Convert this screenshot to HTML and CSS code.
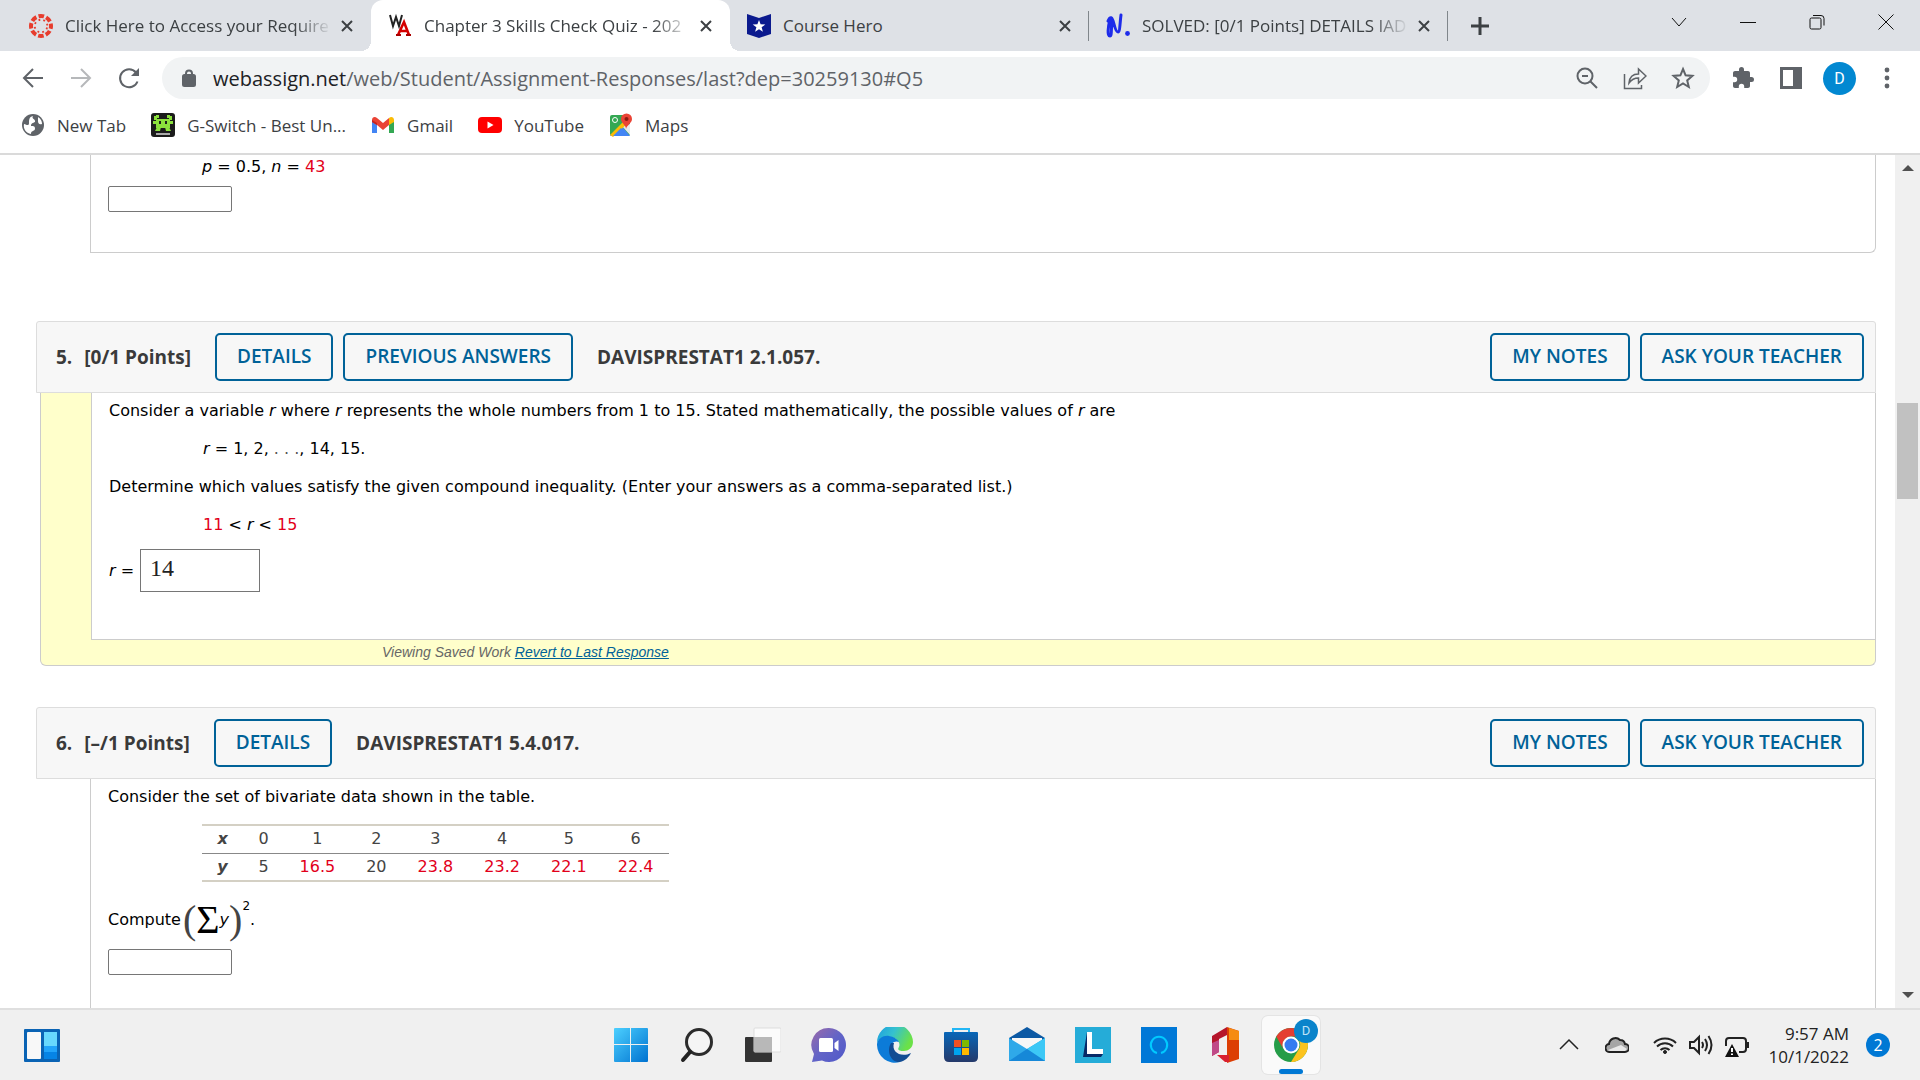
FILE: index.html
```html
<!DOCTYPE html>
<html lang="en">
<head>
    <meta charset="UTF-8">
    <meta name="viewport" content="width=device-width, initial-scale=1.0">
    <title>Chapter 3 Skills Check Quiz</title>
    <link rel="stylesheet" href="styles.css">
</head>
<body>
    <!-- Tabs -->
    <div class="tab-strip">
        <div class="tabs">
            <div class="tab">
                <svg class="tab-icon" viewBox="0 0 24 24">
                    <circle cx="12" cy="12" r="10" fill="none" stroke="#e73c2d" stroke-width="4" stroke-dasharray="5.6 2.25" stroke-dashoffset="2.8"/>
                    <circle cx="12" cy="12" r="6.3" fill="none" stroke="#e73c2d" stroke-width="1.8" stroke-dasharray="1.8 3.15" stroke-dashoffset="-1.6"/>
                </svg>
                <span class="tab-title faded">Click Here to Access your Require</span>
                <button class="tab-close" aria-label="Close tab"><svg viewBox="0 0 12 12"><path d="M1 1l10 10M11 1L1 11"/></svg></button>
            </div>
            <div class="tab active">
                <svg class="tab-icon" viewBox="0 0 24 24">
                    <path d="M2 1l3 11 3-9 3 9 3-11" fill="none" stroke="#222" stroke-width="2"/>
                    <path d="M10 21l6-13 5 13M12 17h7" fill="none" stroke="#d40000" stroke-width="2.6"/>
                    <path d="M8 21h5M18 21h5" stroke="#a00" stroke-width="2"/>
                </svg>
                <span class="tab-title faded">Chapter 3 Skills Check Quiz - 202</span>
                <button class="tab-close" aria-label="Close tab"><svg viewBox="0 0 12 12"><path d="M1 1l10 10M11 1L1 11"/></svg></button>
            </div>
            <div class="tab divided">
                <svg class="tab-icon" viewBox="0 0 24 24">
                    <path d="M0 0l12 4 12-4v20l-12 4-12-4z" fill="#0b1a8e"/>
                    <path d="M12 6l1.6 4.3 4.7.2-3.700 2.800 1.300 4.500-3.900-2.600-3.900 2.600 1.300-4.500-3.700-2.800 4.700-.2z" fill="#fff"/>
                </svg>
                <span class="tab-title">Course Hero</span>
                <button class="tab-close" aria-label="Close tab"><svg viewBox="0 0 12 12"><path d="M1 1l10 10M11 1L1 11"/></svg></button>
            </div>
            <div class="tab divided">
                <svg class="tab-icon" viewBox="0 0 24 24">
                    <path d="M2 7c2-5 5-4 4 1-1 6 0 14-2 14-3 0-2-9 0-17 2-2 3 1 4 5s2 8 4 8c2 0 2-10 3-17" fill="none" stroke="#1d2bea" stroke-width="3" stroke-linecap="round"/>
                    <circle cx="21.500" cy="19.500" r="2.400" fill="#1d2bea"/>
                </svg>
                <span class="tab-title faded">SOLVED: [0/1 Points] DETAILS IAD</span>
                <button class="tab-close" aria-label="Close tab"><svg viewBox="0 0 12 12"><path d="M1 1l10 10M11 1L1 11"/></svg></button>
            </div>
            <button class="new-tab" aria-label="New tab"><svg viewBox="0 0 18 18"><path d="M9 0v18M0 9h18"/></svg></button>
        </div>
        <div class="window-controls">
            <button aria-label="Search tabs"><svg viewBox="0 0 16 16"><path d="M1 4l7 8 7-8"/></svg></button>
            <button aria-label="Minimize"><svg viewBox="0 0 16 16"><path d="M0 8.500h16"/></svg></button>
            <button aria-label="Restore"><svg viewBox="0 0 16 16"><rect x="1" y="4" width="11" height="11" rx="1.500"/><path d="M4 1.500h8q3 0 3 3v7"/></svg></button>
            <button aria-label="Close"><svg viewBox="0 0 16 16"><path d="M.5 .5l15 15M15.500 .5l-15 15"/></svg></button>
        </div>
    </div>

    <!-- Address bar -->
    <div class="toolbar">
        <div class="nav-buttons">
            <button aria-label="Back"><svg viewBox="0 0 24 24"><path d="M22 12H3M12 3l-9 9 9 9"/></svg></button>
            <button class="disabled" aria-label="Forward"><svg viewBox="0 0 24 24"><path d="M2 12h19M12 3l9 9-9 9"/></svg></button>
            <button aria-label="Reload"><svg viewBox="0 0 24 24"><path d="M20.500 15.500A9 9 0 1 1 19 6.500"/><path d="M22 2v8h-8z" fill="#5f6368" stroke="none"/></svg></button>
        </div>
        <div class="omnibox">
            <svg class="lock" viewBox="0 0 14 18"><rect x="1" y="6" width="12" height="11" rx="1.500" fill="#5f6368"/><path d="M4 7V4.500a3 3 0 0 1 6 0V7" fill="none" stroke="#5f6368" stroke-width="2"/></svg>
            <span class="url">webassign.net<span class="url-path">/web/Student/Assignment-Responses/last?dep=30259130#Q5</span></span>
            <button aria-label="Zoom"><svg viewBox="0 0 24 24"><circle cx="10" cy="10" r="7.500"/><path d="M15.500 15.500l6.500 6.500M7 10h6"/></svg></button>
            <button aria-label="Share"><svg viewBox="0 0 24 24"><path d="M1.500 8v14.500h17V19" stroke-width="1.500"/><path d="M6 17c.5-6 4-9 9.500-9V3l7.500 7-7.500 7v-5c-4 0-7 1.500-9.500 5z" stroke-width="1.500"/></svg></button>
            <button aria-label="Bookmark"><svg viewBox="0 0 24 24"><path d="M12 3l2.600 6.300 6.800.6-5.200 4.500 1.600 6.600-5.800-3.500-5.800 3.500 1.600-6.600-5.200-4.500 6.800-.6z"/></svg></button>
        </div>
        <div class="tool-buttons">
            <button aria-label="Extensions"><svg viewBox="0 0 24 24"><path d="M20.500 11H19V7c0-1.100-.9-2-2-2h-4V3.500a2.500 2.500 0 0 0-5 0V5H4c-1.100 0-2 .9-2 2v3.800h1.500a2.700 2.700 0 0 1 0 5.400H2V20c0 1.100.9 2 2 2h3.800v-1.500a2.700 2.700 0 0 1 5.400 0V22H17c1.100 0 2-.9 2-2v-4h1.500a2.500 2.500 0 0 0 0-5z" fill="#5f6368" stroke="none"/></svg></button>
            <button aria-label="Side panel"><svg viewBox="0 0 24 24"><rect x="2.500" y="2.500" width="19" height="19" stroke-width="3"/><path d="M14 2h8v20h-8z" fill="#5f6368" stroke="none"/></svg></button>
            <button class="avatar" aria-label="Profile">D</button>
            <button aria-label="Menu"><svg viewBox="0 0 24 24"><g fill="#5f6368" stroke="none"><circle cx="12" cy="4" r="2.400"/><circle cx="12" cy="12" r="2.400"/><circle cx="12" cy="20" r="2.400"/></g></svg></button>
        </div>
    </div>

    <!-- Bookmarks -->
    <div class="bookmarks">
        <a href="#"><svg viewBox="0 0 24 24"><circle cx="12" cy="12" r="11" fill="#5f6368"/><path d="M12 3c-2 3 3 3 2 6-2 1-4 1-4 4 3 0 4 0 4 3-1 3-4 1-4 5-5-1-8-5-7-10 3 1 5 2 5-1s0-6 4-7zM17 4c3 2 4 4 4 7-3 1-4-1-4-3z" fill="#fff"/></svg>New Tab</a>
        <a href="#"><svg viewBox="0 0 24 24"><rect width="24" height="24" rx="3" fill="#1b1b1b"/><path d="M5 6h14v9H5zM3 3h3v4H3zM18 3h3v4h-3zM5 2h3v3H5zM16 2h3v3h-3zM6 14h4l-1 4H4zM14 14h4l2 4h-5zM2 8h3v3H2zM19 8h3v3h-3z" fill="#8be13c"/><path d="M8 8h2v3H8zM14 8h2v3h-2z" fill="#1b1b1b"/><path d="M5 21h14" stroke="#aaa" stroke-width="2"/></svg>G-Switch - Best Un...</a>
        <a href="#"><svg viewBox="0 0 24 24"><path d="M1 7v13h5V10z" fill="#4285f4"/><path d="M18 10v10h5V7z" fill="#34a853"/><path d="M1 7c0-3 3-4 5-2l6 5 6-5v7l-6 5-6-5-5-3z" fill="#ea4335"/><path d="M18 5c2-2 5-1 5 2v2l-5 3z" fill="#fbbc04"/><path d="M1 7l5 3v2L1 9z" fill="#c5221f"/></svg>Gmail</a>
        <a href="#"><svg viewBox="0 0 24 24"><rect y="4" width="24" height="16" rx="4" fill="#f00"/><path d="M9.500 8.500v7l6-3.500z" fill="#fff"/></svg>YouTube</a>
        <a href="#"><svg viewBox="0 0 24 24"><rect x="1" y="2" width="20" height="21" rx="2" fill="#34a853"/><path d="M1 23L12 12l9 11z" fill="#4285f4"/><path d="M21 11v11l-8-9z" fill="#e8eaed"/><path d="M1 22L18 5l3 3L4 24z" fill="#fbbc04"/><path d="M4 23l8-8 8 8z" fill="#4285f4"/><circle cx="6" cy="7" r="2.500" fill="none" stroke="#fff"/><path d="M17 16c0-4-5-6-5-10a5 5 0 0 1 11 0c0 4-5 6-6 10z" fill="#ea4335"/><circle cx="17.500" cy="6" r="2" fill="#8c1a11"/></svg>Maps</a>
    </div>

    <!-- Page -->
    <div class="viewport">
        <main class="page">
            <section class="question">
                <div class="question-body first">
                    <p class="indent"><i>p</i> = 0.5, <i>n</i> = <span class="red">43</span></p>
                    <input class="answer" type="text" aria-label="Answer 4">
                </div>
            </section>

            <section class="question">
                <div class="question-header">
                    <h2><span>5.</span>[0/1 Points]</h2>
                    <button class="btn">DETAILS</button>
                    <button class="btn">PREVIOUS ANSWERS</button>
                    <span class="question-code">DAVISPRESTAT1 2.1.057.</span>
                    <button class="btn">MY NOTES</button>
                    <button class="btn">ASK YOUR TEACHER</button>
                </div>
                <div class="saved">
                    <div class="question-body saved-body">
                        <p>Consider a variable <i>r</i> where <i>r</i> represents the whole numbers from 1 to 15. Stated mathematically, the possible values of <i>r</i> are</p>
                        <p class="indent"><i>r</i> = 1, 2, <span class="dots">. . .</span>, 14, 15.</p>
                        <p>Determine which values satisfy the given compound inequality. (Enter your answers as a comma-separated list.)</p>
                        <p class="indent"><span class="red">11</span> &lt; <i>r</i> &lt; <span class="red">15</span></p>
                        <div class="answer-row">
                            <label for="r-answer"><i>r</i> =</label>
                            <input id="r-answer" class="math-answer" type="text" value="14">
                        </div>
                    </div>
                    <p class="saved-note">Viewing Saved Work <a href="#">Revert to Last Response</a></p>
                </div>
            </section>

            <section class="question">
                <div class="question-header">
                    <h2><span>6.</span>[&ndash;/1 Points]</h2>
                    <button class="btn">DETAILS</button>
                    <span class="question-code">DAVISPRESTAT1 5.4.017.</span>
                    <button class="btn">MY NOTES</button>
                    <button class="btn">ASK YOUR TEACHER</button>
                </div>
                <div class="question-body last">
                    <p>Consider the set of bivariate data shown in the table.</p>
                    <table class="data">
                        <tr><th><i>x</i></th><td>0</td><td>1</td><td>2</td><td>3</td><td>4</td><td>5</td><td>6</td></tr>
                        <tr><th><i>y</i></th><td>5</td><td class="red">16.5</td><td>20</td><td class="red">23.8</td><td class="red">23.2</td><td class="red">22.1</td><td class="red">22.4</td></tr>
                    </table>
                    <div class="formula">
                        <label for="sum-answer">Compute</label>
                        <span class="paren">(</span><span class="sigma">&Sigma;</span><i>y</i><span class="paren">)</span><sup>2</sup><span>.</span>
                    </div>
                    <input id="sum-answer" class="answer" type="text">
                </div>
            </section>
        </main>
        <div class="scrollbar">
            <svg viewBox="0 0 12 6"><path d="M0 6l6-6 6 6z"/></svg>
            <div class="track"><div class="thumb"></div></div>
            <svg viewBox="0 0 12 6"><path d="M0 0l6 6 6-6z"/></svg>
        </div>
    </div>

    <!-- Taskbar -->
    <footer class="taskbar">
        <div class="widgets">
            <svg viewBox="0 0 36 36"><rect y="2" width="36" height="33" rx="1" fill="#0a63b4"/><rect x="3" y="5" width="14" height="27" rx="1" fill="#f8f8f8"/><path d="M20 5h13v14H20z" fill="#68d8fd"/><path d="M20 19h13v6H20z" fill="#22a4fa"/><path d="M20 25h13v7H20z" fill="#0684e6"/></svg>
        </div>
        <div class="apps">
            <button aria-label="Start"><svg viewBox="0 0 36 36"><defs><linearGradient id="win" x1="0" y1="0" x2="1" y2="1"><stop offset="0" stop-color="#4cd0ff"/><stop offset="1" stop-color="#0072d0"/></linearGradient></defs><path d="M1 2q0-1 1-1h15v16H1zM18 1h16q1 0 1 1v15H18zM1 18h16v17H2q-1 0-1-1zM18 18h17v16q0 1-1 1H18z" fill="url(#win)"/></svg></button>
            <button aria-label="Search"><svg viewBox="0 0 36 36"><circle cx="20" cy="15" r="12.500" fill="#f5f5f5" stroke="#2c2c2c" stroke-width="3"/><path d="M11 25l-7 8" stroke="#222" stroke-width="4" stroke-linecap="round"/></svg></button>
            <button aria-label="Task view"><svg viewBox="0 0 36 36"><rect y="10" width="27" height="25" rx="1" fill="#333"/><rect x="9" y="1" width="27" height="24" rx="1" fill="#fff" fill-opacity=".75" stroke="#ddd"/><path d="M9 10h18v15H9z" fill="#b8b8b8"/></svg></button>
            <button aria-label="Chat"><svg viewBox="0 0 36 36"><defs><linearGradient id="chat" x1="0" y1="0" x2="1" y2="1"><stop offset="0" stop-color="#9c6aa9"/><stop offset=".5" stop-color="#6264c7"/><stop offset="1" stop-color="#5059c9"/></linearGradient></defs><path d="M18 1a17 17 0 1 1-7 32.500L1 35l2-8A17 17 0 0 1 18 1z" fill="url(#chat)"/><rect x="8" y="11" width="14" height="14" rx="1.500" fill="#fff"/><path d="M23.500 16l4-3v11l-4-3z" fill="#fff"/></svg></button>
            <button aria-label="Edge"><svg viewBox="0 0 36 36"><defs><linearGradient id="edge" x1="0" y1="0" x2="1" y2=".4"><stop offset="0" stop-color="#1b9de2"/><stop offset=".5" stop-color="#35c1cf"/><stop offset="1" stop-color="#6be148"/></linearGradient></defs><path d="M0 16A18 18 0 0 1 36 15c0 6-5 9-9 9-5 0-7-1-5-4 2-5-3-9-8-10-6-1-12 1-14 6z" fill="url(#edge)"/><path d="M0 17c1-6 7-9 12-8 6 1 9 4 10 6-5-2-9 2-8 8 1 7 6 12 9 12A18 18 0 0 1 0 18z" fill="#0c7bd8"/><path d="M14 16c-5 8 0 20 9 19 5-1 9-5 11-9-10 5-20-1-17-10-1 0-2 0-3 0z" fill="#114c93"/></svg></button>
            <button aria-label="Microsoft Store"><svg viewBox="0 0 36 36"><defs><linearGradient id="store" x1="0" y1="0" x2="0" y2="1"><stop offset="0" stop-color="#0866b8"/><stop offset="1" stop-color="#25396a"/></linearGradient></defs><path d="M10 8V2h16v6" fill="none" stroke="#22b6f5" stroke-width="2"/><path d="M1 6q0-1 1-1h32q1 0 1 1v24q0 5-5 5H6q-5 0-5-5z" fill="url(#store)"/><path d="M11 13h7v7h-7z" fill="#f25022"/><path d="M19 13h7v7h-7z" fill="#7fba00"/><path d="M11 21h7v7h-7z" fill="#00a4ef"/><path d="M19 21h7v7h-7z" fill="#ffb900"/></svg></button>
            <button aria-label="Mail"><svg viewBox="0 0 36 36"><path d="M0 11L18 0l18 11v8H0z" fill="#0c59a4"/><path d="M3 11h30v6L18 25 3 17z" fill="#f7f7f7"/><path d="M0 11l18 11 18-11v23H0z" fill="#2fa9e9"/><path d="M36 11v23L18 22z" fill="#3cc8f6"/><path d="M0 34l18-12 18 12z" fill="#1688d8"/></svg></button>
            <button aria-label="Lenovo Vantage"><svg viewBox="0 0 36 36"><path d="M0 0h36v36H0z" fill="#25acd8"/><path d="M12 5L8 30h18l2-3H12z" fill="#062a68"/><path d="M12 5h5v17h11v5H12z" fill="#fff"/></svg></button>
            <button aria-label="Alexa"><svg viewBox="0 0 36 36"><path d="M0 0h36v36H0z" fill="#0078d7"/><path d="M16 26a8.200 8.200 0 1 1 4 0" fill="none" stroke="#00caff" stroke-width="2"/></svg></button>
            <button aria-label="Office"><svg viewBox="0 0 36 36"><path d="M5 9L20 0v8l-8 4v13l-7 4z" fill="#b5152b"/><path d="M5 16l7-3v12l-7 4z" fill="#c04a88"/><path d="M20 0l12 4v28l-12 4z" fill="#dc3e04"/><path d="M22 1l10 3v9H22z" fill="#f58c12"/><path d="M10 28h12v7h-4z" fill="#d9202f"/></svg></button>
            <button class="running" aria-label="Chrome"><svg viewBox="0 0 36 36"><circle cx="18" cy="18" r="17" fill="#259c48"/><path d="M3.300 9.500A17 17 0 0 1 32.700 9.500H18a9 9 0 0 0-8 12z" fill="#e43e31"/><path d="M32.700 9.500A17 17 0 0 1 18 35l8-13a9 9 0 0 0-4-12.500z" fill="#fcc31e"/><circle cx="18" cy="18" r="8.500" fill="#fff"/><circle cx="18" cy="18" r="6.500" fill="#347bf0"/></svg><span class="profile-badge">D</span></button>
        </div>
        <div class="tray">
            <svg viewBox="0 0 24 24"><path d="M3 16l9-9 9 9" stroke-width="1.500"/></svg>
            <svg class="cloud" viewBox="0 0 24 24"><path d="M5 19a4 4 0 0 1-1-8 6.500 6.500 0 0 1 11-4 5 5 0 0 1 5 4 4 4 0 0 1 0 8z" fill="#a5a5a5"/><path d="M3 17l13-5 6 4-2 2H5z" fill="#e8e8e8" stroke="none"/></svg>
            <svg viewBox="0 0 24 24"><path d="M1 10a16 16 0 0 1 22 0M4 13.500a11.500 11.500 0 0 1 16 0M7.500 17a6.500 6.500 0 0 1 9 0"/><circle cx="12" cy="19" r="1.500" fill="#222" stroke-width="1"/></svg>
            <svg viewBox="0 0 24 24"><path d="M1 9h4l5-5v16l-5-5H1zM13 9q2 3 0 6M16 6q4 6 0 12M19.500 3q6 9 0 18"/></svg>
            <svg viewBox="0 0 24 24"><path d="M1 13V8q0-3 3-3h14q3 0 3 3v8q0 3-3 3h-4M21 10h2v4h-2z"/><path d="M7 11l7 13H0z" fill="#111" stroke="none"/><path d="M7 15v4M7 20.500v1.500" stroke="#fff"/></svg>
            <div class="clock">9:57 AM<br>10/1/2022</div>
            <span class="count">2</span>
        </div>
    </footer>
</body>
</html>
```
FILE: styles.css
```css
* {
    box-sizing: border-box;
}
body {
    margin: 0;
    height: 100vh;
    display: flex;
    flex-direction: column;
    overflow: hidden;
    background-color: #fff;
    color: #000;
    font-family: 'Open Sans', sans-serif;
}
button {
    padding: 0;
    border: none;
    background: none;
    font-family: inherit;
    cursor: pointer;
}
svg {
    display: block;
    flex-shrink: 0;
}
p {
    margin: 0;
}

/* tabs */
.tab-strip {
    display: flex;
    justify-content: space-between;
    height: 51px;
    flex-shrink: 0;
    background-color: #dee1e6;
}
.tabs {
    display: flex;
    flex: 0 1 1520px;
    min-width: 0;
    padding-left: 12px;
}
.tab {
    position: relative;
    display: flex;
    align-items: center;
    flex: 0 1 359px;
    min-width: 0;
    padding: 0 17px 0 17px;
    color: #3c4043;
    font-size: 17px;
}
.tab.active {
    background-color: #fff;
    border-radius: 12px 12px 0 0;
}
.tab.active::before,
.tab.active::after {
    content: "";
    position: absolute;
    bottom: 0;
    width: 10px;
    height: 10px;
}
.tab.active::before {
    left: -10px;
    background: radial-gradient(circle at 0 0, transparent 10px, #fff 10px);
}
.tab.active::after {
    right: -10px;
    background: radial-gradient(circle at 100% 0, transparent 10px, #fff 10px);
}
.tab.divided {
    background: linear-gradient(#80868b, #80868b) right center / 1px 30px no-repeat;
}
.tab-icon {
    width: 24px;
    height: 24px;
    margin-right: 12px;
    overflow: visible;
}
.tab-title {
    flex: 1;
    white-space: nowrap;
}
.tab-title.faded {
    -webkit-mask-image: linear-gradient(to right, #000 86%, transparent);
    mask-image: linear-gradient(to right, #000 86%, transparent);
}
.tab-close {
    width: 14px;
    margin-left: 8px;
}
.tab-close svg {
    width: 12px;
    height: 12px;
    margin: 0 auto;
    stroke: #3c4043;
    stroke-width: 2;
}
.new-tab {
    width: 64px;
}
.new-tab svg {
    width: 18px;
    height: 18px;
    margin: 0 auto;
    stroke: #3c4043;
    stroke-width: 3;
}
.window-controls {
    display: flex;
    height: 43px;
}
.window-controls button {
    width: 69px;
}
.window-controls svg {
    width: 16px;
    height: 16px;
    margin: 0 auto;
    fill: none;
    stroke: #111;
    stroke-width: 1;
}

/* toolbar */
.toolbar {
    display: flex;
    align-items: center;
    height: 54px;
    flex-shrink: 0;
    padding: 0 9px;
}
.toolbar svg {
    width: 24px;
    height: 24px;
    margin: 0 auto;
    fill: none;
    stroke: #5f6368;
    stroke-width: 2;
}
.toolbar button {
    width: 48px;
    height: 42px;
}
.nav-buttons,
.tool-buttons {
    display: flex;
    align-items: center;
}
.nav-buttons {
    margin-right: 9px;
}
.tool-buttons {
    margin-left: 9px;
}
.toolbar .disabled {
    opacity: 0.45;
}
.omnibox {
    display: flex;
    align-items: center;
    flex: 1;
    min-width: 0;
    height: 42px;
    padding: 0 3px 0 20px;
    border-radius: 21px;
    background-color: #f1f3f4;
}
.toolbar .lock {
    width: 14px;
    height: 18px;
    margin: 0 17px 0 0;
}
.url {
    flex: 1;
    overflow: hidden;
    white-space: nowrap;
    font-size: 20px;
    color: #202124;
}
.url-path {
    color: #5f6368;
}
.toolbar .avatar {
    width: 33px;
    height: 33px;
    margin: 0 7px 0 8px;
    border-radius: 50%;
    background-color: #0288d1;
    color: #fff;
    font: 16px Roboto, sans-serif;
}

/* bookmarks */
.bookmarks {
    display: flex;
    gap: 25px;
    height: 50px;
    flex-shrink: 0;
    align-items: center;
    padding: 0 21px 8px;
    border-bottom: 2px solid #dadada;
}
.bookmarks a {
    display: flex;
    align-items: center;
    color: #3c4043;
    font-size: 17px;
    text-decoration: none;
}
.bookmarks svg {
    width: 24px;
    height: 24px;
    margin-right: 12px;
}

/* page */
.viewport {
    display: flex;
    flex: 1;
    min-height: 0;
}
.page {
    flex: 1;
    overflow: hidden;
    padding: 0 19px 0 36px;
    font: 16px/20px Verdana, 'DejaVu Sans', sans-serif;
}
.question-body {
    margin-left: 54px;
    padding: 6px 17px 0;
    border: 1px solid #ccc;
    border-top: none;
    background-color: #fff;
}
.question-body.first {
    height: 98px;
    padding-top: 2px;
    margin-bottom: 68px;
    border-radius: 0 0 6px 0;
}
.question-body .indent {
    padding-left: 94px;
}
.red {
    color: #e2001a;
}
.answer {
    display: block;
    width: 124px;
    height: 26px;
    border: 1px solid #767676;
    border-radius: 2px;
}
.first .answer {
    margin-top: 9px;
}
.question-header {
    display: flex;
    align-items: center;
    height: 72px;
    padding: 0 11px 0 19px;
    border: 1px solid #ddd;
    border-radius: 3px 3px 0 0;
    background-color: #f7f7f7;
    color: #3a3a3a;
    font: 700 19px 'Open Sans', sans-serif;
}
.question-header h2 {
    margin: 0 24px 0 0;
    font-size: 19px;
    white-space: nowrap;
}
.question-header h2 span {
    margin-right: 12px;
}
.btn {
    height: 48px;
    margin-right: 10px;
    padding: 0 20px 2px;
    border: 2px solid #006298;
    border-radius: 5px;
    color: #006298;
    font-size: 19px;
    font-weight: 600;
    white-space: nowrap;
}
.btn:last-child {
    margin-right: 0;
}
.question-code {
    flex: 1;
    margin-left: 14px;
}

/* saved work */
.saved {
    margin: 0 0 41px 4px;
    border: 1px solid #ccc;
    border-top: none;
    border-radius: 0 0 6px 6px;
    background-color: #ffffcb;
}
.saved-body {
    height: 247px;
    margin-left: 50px;
    padding-top: 8px;
    border-right: none;
}
.saved-body p {
    margin-bottom: 18px;
}
.dots {
    color: #555;
}
.answer-row {
    display: flex;
    align-items: center;
    gap: 6px;
    margin-top: -4px;
}
.math-answer {
    width: 120px;
    height: 43px;
    padding: 0 9px 4px;
    border: 1px solid #767676;
    color: #222;
    font: 24px 'Liberation Serif', serif;
}
.saved-note {
    padding: 2px 0 3px 341px;
    color: #666;
    font: italic 14px/20px 'Liberation Sans', Arial, sans-serif;
}
.saved-note a {
    color: #006298;
}

/* question 6 */
.question-body.last {
    height: 400px;
    padding-top: 8px;
}
.data {
    margin: 17px 0 14px 94px;
    width: 467px;
    table-layout: auto;
    border-collapse: collapse;
    border-top: 2px solid #d4d0c4;
    border-bottom: 2px solid #d4d0c4;
    color: #444;
    text-align: center;
}
.data tr + tr {
    border-top: 1px solid #888;
}
.data td,
.data th {
    height: 28px;
    padding: 0 15px;
}
.data .red {
    color: #e2001a;
}
.formula {
    display: flex;
    align-items: center;
    height: 48px;
}
.paren {
    color: #444;
    font: 40px/48px 'Liberation Serif', serif;
}
.formula label {
    margin-right: 2px;
}
.sigma {
    font: 40px/48px 'Liberation Serif', serif;
}
.formula sup {
    align-self: flex-start;
    font-size: 12px;
    line-height: 20px;
}
.last .answer {
    margin-top: 5px;
}

/* scrollbar */
.scrollbar {
    display: flex;
    flex-direction: column;
    align-items: center;
    width: 25px;
    padding: 10px 0;
    background-color: #f0f0f0;
}
.scrollbar svg {
    width: 12px;
    height: 6px;
    fill: #505050;
}
.track {
    flex: 1;
    padding-top: 28%;
}
.thumb {
    width: 21px;
    height: 96px;
    margin-top: 225px;
    background-color: #c1c1c1;
}

/* taskbar */
.taskbar {
    display: grid;
    grid-template-columns: 1fr auto 1fr;
    align-items: center;
    height: 72px;
    flex-shrink: 0;
    border-top: 2px solid #dfdfdf;
    background-color: #f0f0f0;
}
.taskbar svg {
    width: 36px;
    height: 36px;
}
.widgets {
    padding-left: 24px;
}
.apps {
    display: flex;
    padding-left: 2px;
}
.apps button {
    position: relative;
    width: 58px;
    height: 58px;
    margin: 0 4px;
    border-radius: 6px;
}
.apps svg {
    margin: 0 auto;
}
.apps .running {
    background-color: #fafafa;
    box-shadow: 0 0 0 1px #e4e4e4;
}
.apps .running::after {
    content: "";
    position: absolute;
    left: 17px;
    bottom: 0;
    width: 24px;
    height: 5px;
    border-radius: 3px;
    background-color: #0078d4;
}
.profile-badge {
    position: absolute;
    top: 3px;
    right: 2px;
    width: 24px;
    height: 24px;
    border-radius: 50%;
    background-color: #0a84cb;
    color: #bfe3f7;
    font: 13px/24px Roboto, sans-serif;
}
.tray {
    display: flex;
    justify-content: flex-end;
    align-items: center;
    gap: 12px;
    padding-right: 30px;
}
.taskbar .tray svg {
    width: 24px;
    height: 24px;
    fill: none;
    stroke: #222;
    stroke-width: 2;
}
.tray .cloud {
    margin: 0 12px;
}
.clock {
    margin: 0 5px 0 7px;
    color: #222;
    font-size: 17px;
    line-height: 23px;
    text-align: right;
}
.count {
    width: 24px;
    height: 24px;
    border-radius: 50%;
    background-color: #0078d4;
    color: #fff;
    font-size: 16px;
    line-height: 24px;
    text-align: center;
}
```
